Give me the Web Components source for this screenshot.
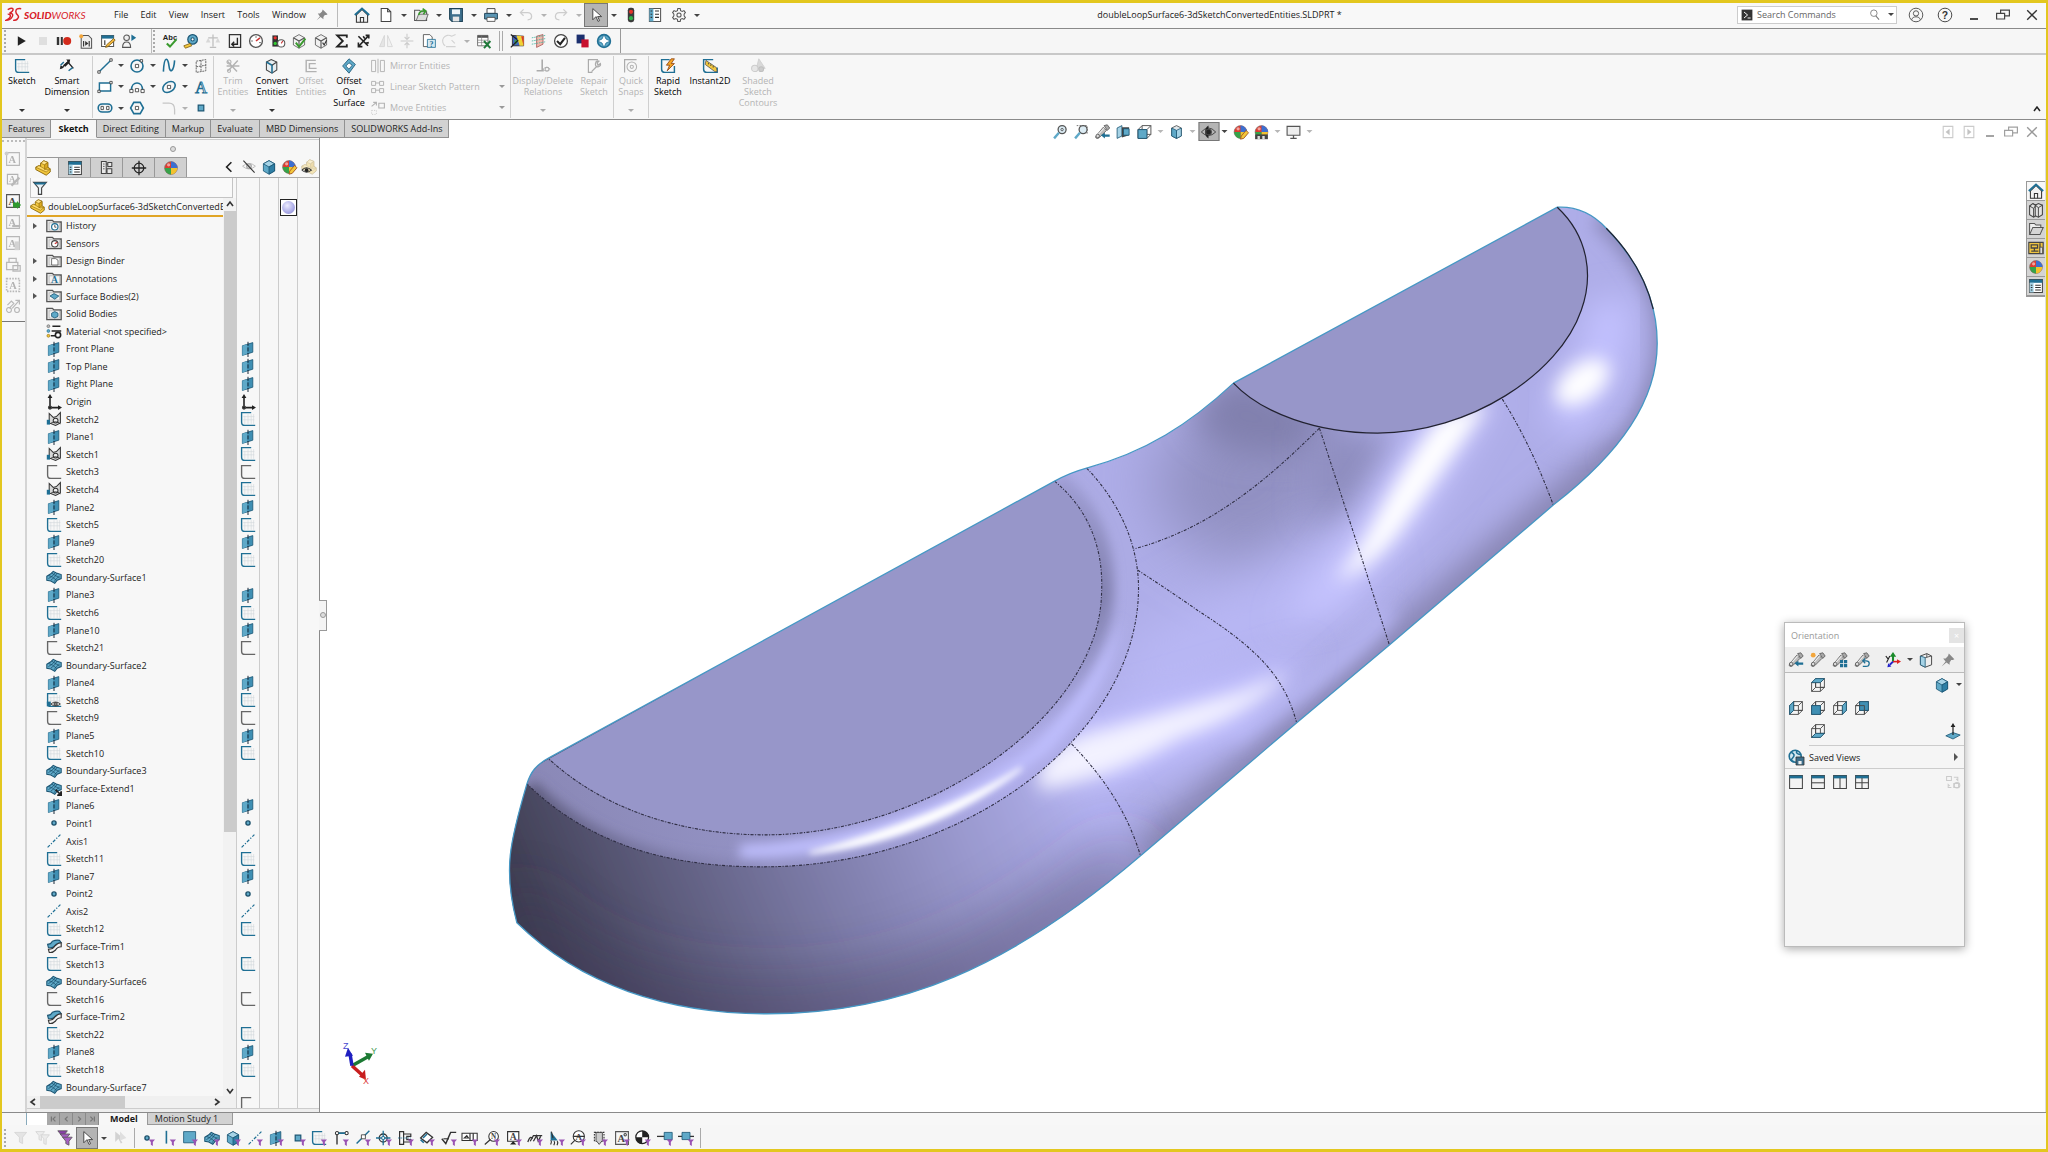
<!DOCTYPE html>
<html lang="en">
<head>
<meta charset="utf-8">
<title>doubleLoopSurface6-3dSketchConvertedEntities.SLDPRT *</title>
<style>
html,body{margin:0;height:100%;overflow:hidden}
body{font-family:"Open Sans","Noto Sans",sans-serif;font-size:9px;color:#1a1a1a;background:#f7f7f7}
</style>
</head>
<body>
<sw-app></sw-app>
<script>
/* ---------- icon drawing helpers (20 x 20 box) ---------- */
const S=(d,c='#444',w=1.4,x='')=>`<path d="${d}" fill="none" stroke="${c}" stroke-width="${w}" ${x}/>`;
const F=(d,c='#444',s='none',w=1)=>`<path d="${d}" fill="${c}" stroke="${s}" stroke-width="${w}"/>`;
const C=(x,y,r,f='none',s='#444',w=1.3)=>`<circle cx="${x}" cy="${y}" r="${r}" fill="${f}" stroke="${s}" stroke-width="${w}"/>`;
const T=(t,x,y,z=11,c='#444',f='Liberation Serif')=>`<text x="${x}" y="${y}" font-size="${z}" font-weight="bold" fill="${c}" text-anchor="middle" font-family="${f}">${t}</text>`;
const B='#1f6f94',L='#5fa9c8',P='#a6d3e6';
const folder=F('M1 17V3h7l2 2h9v12z','#e4e4e4','#555',1.6)+F('M4 6h13v9H4z','#f4f4f4','#999',.6);
const sheetA=S('M2 2h16v16H2z','#555',1.4)+T('A',9,15,13);
const cube=F('M3 6l7-4 7 4v9l-7 4-7-4z',L,'#1b5573')+F('M3 6l7 4 7-4-7-4z',P,'#1b5573')+F('M10 10l7-4v9l-7 4z','#2f7fa5','#1b5573');
const wire='M2 7h11v11H2zM7 2h11v11h-5M7 2v5M2 7l5-5M13 7l5-5M13 18l5-5M7 13v-6';
const wireHid='M7 2v11h11M2 18l5-5';
const tele=F('M2 15l9-11 4 4-9 9c-2 2-6 1-4-2z','#bdbdbd','#555')+F('M12 2l4-1 3 4-3 3z','#a8a8a8','#555')+S('M4 14l8-9','#eee',1.4)+C(4,15,2.2,'#ddd','#555',1);
const ball=C(10,10,8,'#e03b2f','#777',.8)+F('M10 2a8 8 0 0 1 8 8h-8z','#3c6fd0')+F('M10 10h8a8 8 0 0 1-8 8z','#f2c22e')+F('M10 10v8a8 8 0 0 1-8-8z','#37a24a')+C(7,6,2,'#ffffff88','none',0);
const part=F('M1 9l4-2 2 1V4l4-3 5 2v6l3 2v4l-5 4-13-7z','#f3c73c','#8f6b0c',1.2)+F('M7 4l4-3 5 2-4 3z','#ffe38a','#8f6b0c',.8)+F('M1 9l4-2 7 4 2 1 5-1-5 4z','#ffdb6a','#8f6b0c',.8)+F('M12 6l4-3v6l-4 3z','#dca91f','#8f6b0c',.8);
const sk=c=>S('M14 2H2v12q0 4 4 4h13',c,1.7);
const grid=S('M6 6v10M10 4v12M14 4v12M4 7h14M4 11h14M17 4v12','#cfd6da',.7);
const surf=F('M1 9l5-3 3-3 4 2 6 2v5l-5 2-3 4-5-3-5-1z',L,'#1b5573',1.3)+S('M3 12q5-2 9-8M6 14q5-3 8-9M10 16q3-5 7-7M3 8q5 1 10 6M7 5q4 3 10 6','#174d69',.9);
const skA=F('M4 15V3l5 5 4-1 5-5v13l-6 3z','#d8d8d8','#333',1.3)+C(12,12,3,'#eee','#333')+F('M1 11h4v6H1z',B)+S('M5 16q7-5 13 0','#333',1.2);
const cursor=F('M6 2v14l4-4 2.500 6 2-1-2.500-5h5z','#fff','#444',1.2);
const mag=C(12,7,5,'#dcecf4','#555',1.6)+S('M8 11l-6 7',L,3);
const funnel=F('M2 3h15l-5 6v8l-4-2V9z','#c8c8c8','#999');
const mini=F('M12 12h8l-2.700 3v5l-2.500-1.500V15z','#9a54b4');
const I={
play:F('M6 4v12l10-6z','#222'),stop:F('M5 5h10v10H5z','#bbb'),
rec:F('M1 5h3v10H1zM6 5h2.500v10H6z','#333')+C(14,10,5,'#d22a1b','none',0),
script:F('M4 3h9l4 4v12H4z','#eee','#555',1.3)+S('M7 10v7M14 10v7','#333')+F('M9 10l4 3-4 3z','#333')+C(4,4,2.5,'#f2a63c','none',0),
scriptedit:F('M2 3h15v14H2z','#fff','#555',1.3)+F('M2 3h15v4H2z',B)+S('M6 9v6','#333')+F('M8 15l9-8 2 2-9 8-3 1z','#f3b63c','#7a5a10'),
person:C(7,6,3.5,'#eee','#555')+S('M2 18c0-9 10-9 10 0z','#555')+F('M13 2l6 4-6 4z',B),
abc:T('Abc',10,9,9.5,'#222','Liberation Sans')+S('M6 13l4 4 8-9','#3a9a2e',2.6),
measure:C(12,8,6,L,'#1b5573',1.5)+C(12,8,2,'#fff','#1b5573')+F('M1 16l8-3 2 3-8 3z','#f3c73c','#7a5a10'),
scale:S('M10 2v15M4 6h12M6 18h8','#666',1.6)+F('M1 12l3-6 3 6zM13 12l3-6 3 6z','#aaa'),
section:F('M3 2h14v16H3z','#f3f3f3','#333',1.6)+S('M13 6v8H6M9 11l-3 3 3 3','#222',1.7),
gauge:C(10,10,8,'#fff','#555',1.7)+S('M10 10l5-4','#c33',2)+S('M4 10h2M10 4v2M14 12h2','#333',1),
perf:F('M3 3h7v14H3z','#333')+C(6.500,6,2,'#e33','none',0)+C(6.500,13,2,'#3c3','none',0)+C(14,13,4.5,'#fff','#555')+S('M14 13l2-3','#c33'),
boxcheck:F('M3 6l7-4 7 4v9l-7 4-7-4z','#f1f1f1','#555')+S('M3 6l7 4 7-4M10 10v9','#555')+S('M6 12l4 5 8-10','#3a9a2e',2.4),
boxv:F('M3 6l7-4 7 4v9l-7 4-7-4z','#f1f1f1','#555')+S('M3 6l7 4 7-4M10 10v9','#555')+S('M12 12l2 3 3-6','#333'),
sigma:S('M16 6V3H4l7 7-7 7h12v-3','#222',2.3),
fx:S('M3 4l12 12M16 3L4 16M12 3h4v4M3 12v5h5','#222',2)+S('M9 4l2 3M12 13l4-1','#222',2),
mirror:F('M8 3v14H2z','#ccc','#999')+F('M12 3v14h6z','#eee','#999'),
symm:S('M2 10h16M10 1v6M10 13v6M7 5l3 3 3-3M7 15l3-3 3 3','#888'),
docq:F('M3 2h8l3 3v12H3z','#fff','#444')+F('M8 8h10v10H8z','#d6e8f0',B)+T('?',13,17,10,B),
curve:S('M4 16a7 7 0 0 1 8-12M12 4l5-2M5 17h12M12 9l4 4','#999'),
excel:F('M2 3h13v13H2z','#fff','#555')+F('M2 3h13v3H2z','#555')+S('M2 9h13M2 12h13M7 3v13','#777',.8)+S('M10 10l8 9M18 10l-8 9','#1f7a3a',2.4),
sim:F('M3 3l14 1v12H3z','#3f62c4','#222')+F('M8 3l9 1v12H12z','#f0d336')+F('M14 4h3v12z','#d8392b')+F('M5 9l6 0-4 6z','#37a24a')+S('M1 18L10 9M1 2l8 6','#222',1.6),
flow:F('M7 4l8-2v12l-8 4z','#f0b8ac','#a55')+S('M1 6l17-3M1 10l17-3M1 14l17-3','#43b2a0',1,'stroke-dasharray="2 1"'),
okcirc:C(10,10,8,'#fff','#444',1.6)+S('M5 10l4 4 6-8','#222',2.6),
rects:F('M2 2h10v11H2z','#1b2f6e')+F('M8 8h9v10H8z','#c8102e'),
star:C(10,10,8,L,B,2)+F('M10 2l2.500 5.500L18 10l-5.500 2.500L10 18l-2.500-5.500L2 10l5.500-2.500z','#fff',B),
home:F('M3 10v9h14v-9l-7-7z','#f2f2f2','#333',1.3)+S('M1 10l9-8 9 8',B,2.4)+S('M8 19v-6h4v6','#333',1.3),
doc:F('M4 2h8l4 4v12H4z','#fff','#444',1.3)+S('M12 2v4h4','#444',1.3),
open:F('M2 17V4h6l2 2h7v11z','#f3f3f3','#555',1.3)+F('M4 17l3-8h12l-3 8z','#ddd','#555')+S('M7 10c1-5 5-6 8-5M12 2l4 3-3 4','#3a9a2e',2),
save:F('M2 2h16v16H5l-3-3z','#3d6f8c','#1f4358',1.3)+F('M5 3h10v6H5z','#eef5f8')+F('M6 12h8v6H6z','#e6e6e6'),
print:F('M5 2h10v6H5z','#fff','#444',1.2)+F('M2 8h16v7H2z','#5a95b3','#1f4358',1.2)+F('M5 13h10v5H5z','#fff','#444'),
undo:S('M3 7h9q5 0 5 5 0 4-5 4M7 3L3 7l4 4','#888',1.6),
redo:S('M17 7H8q-5 0-5 5 0 4 5 4M13 3l4 4-4 4','#888',1.6),
cursor,
light:`<rect x="6" y="1" width="8" height="18" rx="3" fill="#3a3a3a"/>`+C(10,6,2.6,'#e5332a','none',0)+C(10,14,2.6,'#2fb34a','none',0),
options:F('M3 2h14v16H3z','#fff','#555',1.3)+F('M3 2h5v16H3z',L)+S('M10 5h5M10 9h5M10 13h5M4.500 5h2M4.500 9h2M4.500 13h2','#333',1.4),
gear:S('M8.500 2h3l.5 2.500 2 1 2.200-1 1.800 2.500-1.600 2v2l1.600 2-1.800 2.500-2.200-1-2 1-.5 2.500h-3L8 15.500l-2-1-2.200 1L2 13l1.600-2V9L2 7l1.800-2.500 2.200 1 2-1z','#555',1.3)+C(10,10,2.6,'none','#555'),
pin:F('M11 2l7 7-2 1-2 0-2 3 0 3-4-3-6 5 5-6-3-4h3l3-3z','#888'),
search:C(9,8,5,'none','#777',1.3)+S('M12 12l5 6','#777',1.6),
term:F('M1 1h18v18H1z','#333')+S('M5 5l6 5-6 5M11 15h5','#fff',1.6),
user:C(10,10,8.5,'#f7f7f7','#555',1.2)+C(10,8,3.3,'none','#555',1.2)+S('M4.500 16c1-5 10-5 11 0','#555',1.2),
help:C(10,10,8.5,'#f7f7f7','#444',1.2)+T('?',10,14.500,13,'#333','Liberation Sans'),
min:S('M5 15h10','#333',2.2),rest:S('M2 8h10v7H2zM7 8V4h11v7h-6','#444',1.5),close:S('M4 4l12 12M16 4L4 16','#333',1.7),
sketch:sk(B)+grid,skgray:sk('#666'),
dim:S('M3 13l8-8 7 8','#222',1.6)+F('M9 2l5 0-1 5zM1 14l1-5 4 3z','#222')+S('M2 9l4-4M12 16l5-4',B,1.8)+F('M5 9l6-5 2 2-5 5z','#222'),
line:S('M3 17L17 3',B,1.8)+F('M1 16h3v3H1zM16 1h3v3h-3z','#fff','#333'),
circle:C(10,10,7.5,'none',B,2)+F('M8 8h4v4H8z','#fff','#333')+F('M14 2h3v3h-3z','#fff','#333'),
spline:S('M3 17C4 -5 9 0 10 10S16 17 17 3',B,2),
planegrid:S('M4 4l12-2v14L4 18zM10 3v14M4 11l12-2','#555',1.1,'stroke-dasharray="2.500 1"'),
rect:F('M3 5h14v10H3z','#fff',B,1.8)+F('M1 14h3v3H1zM16 3h3v3h-3z','#fff','#333'),
arc:S('M3 14C3 2 17 2 17 14',B,2)+F('M1 13h4v4H1zM15 13h4v4h-4zM8 12h4v4H8z','#fff','#333'),
ellipse:`<ellipse cx="10" cy="10" rx="8.500" ry="6" transform="rotate(-35 10 10)" fill="none" stroke="${B}" stroke-width="2"/>`+F('M8 8h4v4H8z','#fff','#333'),
text:`<text x="10" y="18" font-size="21" text-anchor="middle" font-family="Liberation Serif" fill="#fff" stroke="${B}" stroke-width="1.1">A</text>`,
slot:`<rect x="1.500" y="5" width="17" height="10" rx="5" fill="none" stroke="${B}" stroke-width="2"/>`+F('M5 8h3v4H5zM12 8h3v4h-3z','#fff','#333'),
poly:F('M6 3h8l4 7-4 7H6l-4-7z','none',B,2)+F('M8 8h4v4H8z','#fff','#333'),
fillet:S('M2 4h8q7 0 7 8v6','#777',1.6),
pt:F('M6.500 6.500h7v7h-7z',L,'#1b5573',1.5),
trim:S('M3 4l12 13M16 3L4 16M2 10h16','#444',1.8)+C(5,5,2.5)+C(5,16,2),
convert:F('M3 5l6-3 7 3v10l-6 4-7-4z','#e8eef1','#444',1.3)+S('M3 5l7 4v10',B,2)+S('M10 9l6-4','#444'),
offset:S('M16 3H4v14h13M16 7H8v6h9','#444',1.8),
offsurf:F('M10 1l8 7-8 11-8-9z',L,'#1b5573')+F('M10 6l4 3-4 5-4-4z','#fff','#1b5573'),
mirrorent:S('M2 3v14M2 3h5v14H2M18 3v14M18 3h-5v14h5M10 1v18','#444',1.2),
pattern:S('M2 3h5v5H2zM2 12h5v5H2zM12 3h5v5h-5zM12 12h5v5h-5zM7 5h5M7 14h5','#444',1.2),
move:S('M2 8l6-5M4 3h4v4M11 4h7v6h-7z','#444',1.4)+S('M2 13h6v5H2z','#777',1,'stroke-dasharray="1.500 1.500"'),
rel:S('M9 2v14M2 16h9','#333',2)+C(15,14,2.3)+S('M10 14q5-5 9 0-4 5-9 0','#333',1),
repair:S('M15 2H3v16h5','#333',1.5)+S('M7 17l6-6M12 6q-1 5 3 5 4-1 3-4l-3 2-1-3 2-2q-3-1-4 2','#333',1.6),
snap:S('M2 18V2h15','#333',1.5)+C(11,11,6)+C(11,11,2),
rapid:S('M12 2H2v12q0 4 4 4h12V10',B,1.8)+F('M18 1l-4 0-6 8h4l-3 7 9-9h-4z','#f5a623','#8a3b0c'),
inst:S('M14 2H2v12q0 4 4 4h13V12',B,1.8)+F('M5 3l13 9 1 5-3 0-12-9z','#f3c73c','#555')+S('M8 6v2M11 8v2M14 10v2','#333',1),
shaded:F('M11 1l8 12H8z','#aaa','#888')+C(6,13,4,'#ccc','#888')+C(14,14,3,'#888','#666'),
filt:F('M2 3h16l-6 7v8H8v-8z','#e9f1f5','#444',1.4)+F('M2 3h16l-2 2.500H4z',B),
part,
prop:F('M2 2h16v16H2z','#fff','#444',1.3)+F('M2 2h16v4H2z',B)+F('M2 6h5v12H2z',P)+S('M9 9h7M9 12h7M9 15h7M3.500 9h2M3.500 12h2M3.500 15h2','#333',1.3),
config:F('M3 2h6v15H3z','#e8e8e8','#444',1.3)+S('M5 5h2M5 8h2M5 11h2','#444',1)+F('M11 3h5v5h-5zM10 11h6v6h-6z','#e8e8e8','#444',1.3)+S('M9 5h2M9 14h1','#444'),
cross:C(10,10,6,'none','#222',1.5)+S('M10 1v18M1 10h18','#222',1.6),
ball,ballpen:ball+F('M11 15l6-7 3 3-6 7-4 1z','#f3c73c','#9a4a20'),
chev:S('M13 4l-6 6 6 6','#222',2),
eyeoff:S('M2 9q8-7 16 0-8 7-16 0','#bbb',1.2)+C(10,9,3,'#ccc','#aaa')+S('M3 2l14 15','#333',1.4),
cube,
parteye:`<g opacity=".35">${part}</g>`+S('M1 14q6-6 12 0-6 5-12 0','#333',1.3)+C(7,14,2.3,'#222','none',0),
hist:folder+C(11,11,4,'#fff',B,1.5)+S('M11 8.500v3h2','#333',1),
sens:folder+C(11,11,4,'#fff','#444',1.4)+S('M11 11l3-2','#c33',1.6),
binder:folder+F('M7 7h5l3 2v6H7z','#fff','#555'),
anno:folder+T('A',10.5,15,12,B),
sbody:folder+F('M5 10l5-3 6 3-5 4z',L,'#1b5573'),
solid:folder+F('M7 9l4-2 4 2v4l-4 2-4-2z',L,'#1b5573'),
mat:C(3,4,1.8,'#bbb','#666',.8)+C(3,10,1.8,L,B,.8)+C(3,16,1.8,'#f3c73c','#8f6b0c',.8)+S('M8 4h10M7 10h12M6 16h6','#222',1.8)+C(15,15,3.3,'#fff','#222',2),
plane:F('M3 6l13-4v12L3 18z','#3f8fb3','#1b5573')+F('M3 6l6-2v12l-6 2z',L)+S('M10 1v19','#123',1.2,'stroke-dasharray="5 2"'),
origin:S('M5 4v13h12','#222',2)+F('M5 0l3 5H2zM20 17l-5-3v6z','#222')+C(5,17,2,'#222'),
skA,skB:sk(B)+grid+F('M1 12h5v6H1z',B)+S('M6 15q6-5 12 0-6 5-12 0','#444',1.2)+C(12,15,2,'#888'),
surf,surfx:surf+F('M12 12l7 7M14 19h5v-5','#222','#222',2),
surft:F('M2 8q4 0 6-4 5-2 9-1l2 3q-6 0-8 4-3 3-8 2z',L,'#1b5573',1.4)+F('M3 14q6 0 8-4 4-4 8-4v5q-5 0-7 4-4 4-8 3z','#f2f2f2','#333',1.4),
dot:C(10,10,2.6,L,'#1b4f6a',1.7),
axis:S('M2 18L18 2',B,1.5,'stroke-dasharray="4 2 1.500 2"'),
blank:'',
zoomfit:mag+C(12,7,1.5,'none','#444',1),zoomarea:S('M4 2h13v10','#555',1,'stroke-dasharray="2 1.500"')+mag,prev:tele+F('M8 14l5-3v2h6v3h-6v2z',B),
sect:F('M2 5l6-3v13l-6 3z',P,'#1b5573')+F('M8 4h9v10l-9 3z','#444')+F('M10 6h7v8h-7z',L,'#1b5573'),
views:F('M2 7h10v11H2z',L,'#1b5573')+S(wire,'#555',1.2)+F('M2 7h11v11H2z',L,'#1b5573'),
dispst:F('M4 5l6-3 6 3v10l-6 3-6-3z','#dfe7eb','#444')+F('M4 5l6 3v10l-6-3z',L,'#1b5573')+F('M10 8l6-3v10l-6 3z',P,'#1b5573'),
eye:S('M1 10q9-10 18 0-9 9-18 0','#444',1.2)+F('M10 2v16a8 8 0 0 1-4-8 8 8 0 0 1 4-8','#222')+C(10,10,3.5,'#222'),
scene:ball+F('M2 13h16v6H2z','#444')+F('M5 15h3v4H5zM11 15h3v4h-3z','#ddd'),
monitor:F('M2 3h16v11H2z','#eee','#555',1.4)+S('M10 14v4M6 18h8','#555',1.6),
docl:S('M4 3h12v14H4z','#999',1.4)+F('M12 6v8l-5-4z','#888'),docr:S('M4 3h12v14H4z','#999',1.4)+F('M8 6v8l5-4z','#888'),
lib:F('M2 5l4-3 4 2v13l-3 2-5-3z','#e2e2e2','#444',1.3)+F('M9 4l4-2 5 2v12l-5 3-4-2z','#e2e2e2','#444',1.3)+S('M2 5l5 3v11M6 2l4 2-3 4M9 4l4 3v12M13 7l5-3','#444',1.2),
fold2:F('M2 17V3h6l2 2h6v3','#eee','#555',1.3)+F('M2 17l4-9h13l-4 9z','#d5d5d5','#555',1.3),
palette:F('M1 3h18v14H1z','#f0c541','#444',1.4)+S('M4 6h8v4H4zM4 14h9M8 10v4M15 4v12','#444',1.6)+F('M15 9h3v8h-3z','#eee','#444'),
v_l:tele+F('M8 14l5-3v2h6v3h-6v2z',B),v_new:tele+C(4,4,3,'#f2a63c','none',0),v_grid:tele+F('M10 10h4v4h-4zM15 10h4v4h-4zM10 15h4v4h-4zM15 15h4v4h-4z',B),v_undo:tele+S('M11 18h4q4 0 4-4 0-3-4-3h-3M14 8l-3 3 3 3',B,1.6),
triad:S('M10 12V4','#1a8a2a',2.6)+F('M10 0l4 6H6z','#1a8a2a')+S('M10 12h6','#d22',2)+F('M20 12l-5-3v6z','#d22')+S('M10 12l-4 4','#22c',2.4)+F('M3 19l1-5 4 4z','#22c')+S('M1 5l3 4 2-4M4 9l-2 4','#222',1.4),
persp:F('M3 5l8-3 6 3v11l-8 3-6-3z','#eee','#444',1.2)+F('M3 5l6 2v12l-6-3z',P,'#1b5573')+S('M9 7l8-2M11 2v5','#444',1),
o_top:S(wire+wireHid,'#444',1.1)+F('M2 7l5-5h11l-5 5z',L,'#1b5573'),o_bot:S(wire+wireHid,'#444',1.1)+F('M2 18l5-5h11l-5 5z',L,'#1b5573'),
o_left:S(wire+wireHid,'#444',1.1)+F('M2 7l5-5v11l-5 5z',L,'#1b5573'),o_right:S(wire+wireHid,'#444',1.1)+F('M13 7l5-5v11l-5 5z',L,'#1b5573'),
o_front:S(wire+wireHid,'#444',1.1)+F('M2 7h11v11H2z','#3f8fb3','#1b5573'),o_back:S(wire+wireHid,'#444',1.1)+F('M7 2h11v11H7z','#3f8fb3','#1b5573')+S('M2 7h11v11','#444',1.1),
normal:F('M1 16l9-4 9 3-9 5z',L,'#1b5573')+S('M10 15V4','#222',1.5)+F('M10 0l3 5H7z','#222'),
globe:C(9,9,7.5,'#d5e8f0',B,2)+S('M4 4q6 3 2 7t2 5M11 2q-2 4 5 5',B,2)+F('M10 10h10v10H10z','#3d6f8c','#333')+F('M13 15h4v4h-4z','#eee'),
w1:F('M2 2h16v16H2z','#f3f3f3','#444',1.3)+F('M2 2h16v3.500H2z',B),
link:S('M2 3h6v5H2zM11 12h6v5h-6zM11 4h5v4l-2-2M8 17H4v-4l2 2','#888',1.3)+C(15,14,3.5,'none','#888'),
f1:funnel,f2:F('M1 2h11l-4 5v6l-3-1V7z','#ddd','#999')+F('M7 6h11l-4 5v7l-3-1v-6z','#ddd','#999'),
f3:F('M1 1h12l-4 5H5z','#8a3fa8','#555')+F('M4 5h12l-4 5H8z','#a65fc2','#555')+F('M7 9h12l-4 5v5l-4-2v-3z','#a65fc2','#555'),
curs2:F('M4 2v13l4-4 3 6 2-1-3-5h5z','#999')+F('M10 2v11l8-3z','#bbb'),
edge:S('M8 1v16',B,2),face:F('M2 2h15v14H2z',L,'#1b5573'),
cl:S('M5 18V4h12M3 4h4M17 2v4','#333',1.7)+C(5,4,2,'#fff','#333')+C(17,4,2,'#fff','#333')+S('M7 4h8',B,2),
seg:S('M2 17L18 1',B,1.8)+F('M8 6h5v5H8z','#fff','#333'),tgt:C(9,10,5,'none','#333',1.6)+S('M9 1v18M0 10h18',B,1.6)+C(9,10,2,'#fff',B),
datum:S('M2 2h5v16H2zM7 5h9v3h-5v4h5v3H7','#333',1.5)+S('M0 10h16',B,1,'stroke-dasharray="2 1"'),lens:F('M2 10l7-7 8 6-7 7z','#fff','#333',1.6)+S('M5 10l5-5M2 12l4 4',B,2),
surfin:S('M1 11l5 6 6-14h7','#333',1.8)+S('M3 11h7','#333'),gtol:F('M0 4h19v9H0z','#fff','#333',1.3)+S('M10 4v9M14 4v9M3 10l3-3 2 3z','#333',1.5),
noten:C(12,8,6,'#fff','#333')+T('N',12,11.5,9)+S('M8 12l-7 6','#333',1.6),
anote:F('M2 2h14v12H2z','#fff','#333',1.4)+T('A',9,12.5,12)+F('M5 18l4-4 4 4z','#222'),
weld:S('M1 15q3-9 6-4M4 14l4-7h11M8 14l4-7 2 7 3-6','#333',1.6),
cater:F('M2 2v11h9z',B)+S('M2 18q2-4 0-5M6 19q2-4 0-5M10 19q2-4 0-5','#333',1.4)+S('M3 2l2 8','#333'),
balloon:C(11,8,7,'#fff','#333')+T('A',11,13,11)+S('M6 13l-5 5M4 8h14','#333',1.4),
cosm:S('M3 3h12v11H3z','#333',1.4,'stroke-dasharray="2 1.500"')+F('M5 3h8v10l-4 5-4-5z','#ccc','#333'),
sheet:sheetA+C(14,6,1.5),com:C(9,9,8,'#fff','#222',1.5)+F('M9 1a8 8 0 0 1 8 8H9zM9 9v8a8 8 0 0 1-8-8z','#222'),
conn:S('M0 8h12','#333',1.6)+F('M9 3h10v9H9z',L,'#1b5573'),conn2:S('M0 8h20','#333',1.6)+F('M5 3h10v9H5z',L,'#1b5573'),
an1:sheetA+C(2,3,2.5,'#888','none',0),an2:S('M3 3h13v12H3z')+T('A',9,13,11)+S('M8 17L18 7','#555',3),an3:sheetA+F('M10 12l5 0v-2l5 5-5 5v-2h-5z','#2f9a2f'),an4:sheetA+S('M9 15h10','#555',2.6),an5:sheetA+F('M12 8h6v11h-6z','#999'),
an6:S('M2 8h14v9H2zM5 8V3h9v5M10 12h9v7h-9z','#555',1.6),an7:S('M2 2h16v16H2z','#555',2,'stroke-dasharray="2 1.500"')+T('A',10,15,13),an8:C(5,15,3)+C(15,15,3)+S('M3 9l5-5 3 3-6 6M9 13l8-9M13 3h5v5','#555',1.5)
};
I.w2=I.w1+S('M2 11h16','#444',1.3);I.w3=I.w1+S('M10 5v13','#444',1.3);I.w4=I.w1+S('M2 11h16M10 5v13','#444',1.3);

class Base extends HTMLElement{
  css(){return ''} html(){return ''}
  connectedCallback(){
    if(this.shadowRoot)return;
    this.attachShadow({mode:'open'}).innerHTML=`<style>*{box-sizing:border-box}button,input{font:inherit;color:inherit;background:none;border:0;padding:0;margin:0;white-space:nowrap}${this.css()}</style>${this.html()}`;
  }
}
const def=(n,c)=>customElements.define(n,c);
const ic=(n,z)=>`<sw-icon name="${n}"${z?` style="--size:${z}px"`:''}></sw-icon>`;
const tb=(n,a='')=>`<sw-tool icon="${n}" ${a}></sw-tool>`;
const ar='<sw-tool arrow></sw-tool>', arx='<sw-tool arrow off></sw-tool>';

/* a single picture taken from the icon table */
def('sw-icon',class extends Base{
  css(){return ':host{display:block;width:var(--size,16px);height:var(--size,16px);flex:none}svg{display:block;width:100%;height:100%;overflow:visible}'}
  html(){return `<svg viewBox="0 0 20 20" aria-hidden="true">${I[this.getAttribute('name')]||''}${this.hasAttribute('filter')?mini:''}</svg>`}
});
/* a toolbar button: an icon or a small drop-down arrow */
def('sw-tool',class extends Base{
  css(){return `:host{display:flex;flex:0 0 var(--cell,24px);align-self:stretch;min-width:0}:host([arrow]){flex-basis:var(--arrow,11px)}:host([fill]){flex:1 1 0}
  :host([off]) button{filter:grayscale(1);opacity:.38}:host([on]){background:#b4b4b4;outline:1px solid #777;outline-offset:-1px}
  button{flex:1;display:flex;align-items:center;justify-content:center}i{border:3px solid transparent;border-top-color:#444;border-bottom:0}`}
  html(){const n=this.getAttribute('icon');return `<button aria-label="${n||'more'}">${n?`<sw-icon name="${n}"${this.hasAttribute('filter')?' filter':''}></sw-icon>`:'<i></i>'}</button>`}
});

def('sw-titlebar',class extends Base{
  css(){return `:host{display:flex;height:26px;border-bottom:1px solid #8a8a8a;align-items:center;background:#f8f8f8;padding-bottom:2px}
  .logo{display:flex;align-items:center;width:103px;padding-left:3px;color:#d8232a;font:italic 10px Lato,sans-serif;flex:none}.logo svg{width:18px;height:18px;margin-right:1px}.logo b{font-weight:900}
  nav{display:flex;width:202px;justify-content:space-between;padding:0 1px 0 9px;flex:none}
  .pin{width:30px;display:flex;justify-content:center}.tools{display:flex;height:24px;border-left:1px solid #bbb;padding-left:12px;align-self:flex-start;align-items:center}
  .name{flex:1;text-align:center}
  .search{display:flex;align-items:center;width:160px;height:18px;border:1px solid #ccc;background:#fff;padding-left:3px;gap:4px;color:#777}
  .search label{display:flex}input{flex:1;min-width:0;outline:0}input::placeholder{color:#666;opacity:1}
  .win{display:flex;height:24px;padding-left:4px;--cell:29px}`}
  html(){return `<div class="logo"><svg viewBox="0 0 20 20"><path d="M3 4q6-3 6 0 0 2-4 4 5 0 3 4-2 4-7 4 5-3 5-5 0-2-3-2M18 3q-6-1-6 3 0 2 2 4t0 4q-1 2-5 2" fill="none" stroke="#d8232a" stroke-width="1.600"/></svg><b>SOLID</b>WORKS</div>
  <nav>${['File','Edit','View','Insert','Tools','Window'].map(t=>`<button>${t}</button>`).join('')}</nav><div class="pin">${ic('pin',14)}</div>
  <div class="tools">${tb('home')}${tb('doc')}${ar}${tb('open')}${ar}${tb('save')}${ar}${tb('print')}${ar}${tb('undo','off')}${arx}${tb('redo','off')}${arx}${tb('cursor','on')}${ar}${tb('light')}${tb('options')}${tb('gear')}${ar}</div>
  <div class="name">doubleLoopSurface6-3dSketchConvertedEntities.SLDPRT *</div>
  <div class="search"><label for="q">${ic('term',12)}</label><input id="q" placeholder="Search Commands" aria-label="Search Commands">${ic('search',13)}<sw-tool arrow></sw-tool></div>
  <div class="win">${['user','help','min','rest','close'].map(n=>tb(n)).join('')}</div>`}
});

def('sw-macrobar',class extends Base{
  css(){return `:host{display:flex;height:26px;border-bottom:2px solid #c8c8c8;background:#f6f6f6;padding-left:2px}
  .grip{width:3px;margin:1px 3px 1px 0;border-left:2px dotted #aaa}div{display:flex}.a{width:130px;margin-right:11px}.b{width:302px}.c{width:108px;margin-left:4px}
  .s{width:4px;border:solid #aaa;border-width:0 1px;margin:2px 0 2px 3px}.e{border-right:1px solid #999;width:6px}.sep{border-left:1px solid #bbb;width:2px}`}
  html(){const m=a=>a.map(n=>n[0]=='-'?tb(n.slice(1),'fill off'):tb(n,'fill')).join('');
  return `<div class="grip"></div><div class="a">${m(['play','-stop','rec','script','scriptedit','person'])}</div><div class="sep"></div><div class="grip"></div>
  <div class="b">${m(['abc','measure','-scale','section','gauge','perf','boxcheck','boxv','sigma','fx','-mirror','-symm','docq','-curve'])}</div>${arx}<sw-tool icon="excel"></sw-tool><div class="s"></div>
  <div class="c">${m(['sim','flow','okcirc','rects','star'])}</div><div class="e"></div>`}
});

/* large ribbon command: icon over a slotted caption */
def('sw-command',class extends Base{
  css(){return `:host{display:flex;flex:none}button{flex:1;display:flex;flex-direction:column;align-items:center;padding:3px 0 7px;line-height:11px;color:#000}
  :host([off]) button{color:#b4b4b4}:host([off]) sw-icon,:host([off]) i{filter:grayscale(1);opacity:.38}
  i{margin-top:auto;border:3px solid transparent;border-top-color:#333;border-bottom:0}span{margin-top:1px}`}
  html(){return `<button><sw-icon name="${this.getAttribute('icon')}"></sw-icon><span><slot></slot></span>${this.hasAttribute('menu')?'<i></i>':''}</button>`}
});
def('sw-ribbon',class extends Base{
  css(){return `:host{display:flex;height:65px;border-bottom:1px solid #8a8a8a;background:#f7f7f7}
  hr{width:1px;margin:1px 0;border:0;background:#cfcfcf;flex:none}.grid{display:grid;grid-template-columns:repeat(4,32px);width:120px;padding-left:1px;--cell:22px;--arrow:10px}.grid div{display:flex}
  .list{width:142px;display:grid;grid-template-rows:repeat(3,21px);color:#b4b4b4}.list button{display:flex;align-items:center;gap:4px;padding-left:2px}.list sw-icon{filter:grayscale(1);opacity:.38}.list i{margin-left:auto;margin-right:5px;border:3px solid transparent;border-top-color:#999;border-bottom:0}
  .fold{margin-left:auto;align-self:flex-end;padding:0 5px 4px}.w34{width:34px}.w38{width:38px}.w40{width:40px}.w46{width:46px}.w50{width:50px}.w64{width:64px}`}
  html(){const c=(i,w,t,a='')=>`<sw-command icon="${i}" class="w${w}" ${a}>${t}</sw-command>`;
  const g=(n,a=1,o='')=>`<div>${tb(n,o)}${a?(o?arx:ar):''}</div>`;
  return c('sketch',40,'Sketch','menu')+c('dim',50,'Smart<br>Dimension','menu')+'<hr>'+
  `<div class="grid">${g('line')}${g('circle')}${g('spline')}${g('planegrid',0)}${g('rect')}${g('arc')}${g('ellipse')}${g('text',0)}${g('slot')}${g('poly',0)}${g('fillet',1,'off')}${g('pt',0)}</div><hr>`+
  c('trim',38,'Trim<br>Entities','off menu')+c('convert',40,'Convert<br>Entities','menu')+c('offset',38,'Offset<br>Entities','off')+c('offsurf',38,'Offset<br>On<br>Surface')+
  `<div class="list"><button>${ic('mirrorent')}Mirror Entities</button><button>${ic('pattern')}Linear Sketch Pattern<i></i></button><button>${ic('move')}Move Entities<i></i></button></div><hr>`+
  c('rel',64,'Display/Delete<br>Relations','off menu')+c('repair',38,'Repair<br>Sketch','off')+'<hr>'+c('snap',34,'Quick<br>Snaps','off menu')+'<hr>'+c('rapid',38,'Rapid<br>Sketch')+c('inst',46,'Instant2D')+c('shaded',50,'Shaded<br>Sketch<br>Contours','off')+
  `<button class="fold" aria-label="Collapse"><svg width="8" height="6" viewBox="0 0 8 6"><path d="M1 5l3-4 3 4" fill="none" stroke="#222" stroke-width="1.500"/></svg></button>`}
});
def('sw-tabs',class extends Base{
  css(){return `:host{display:flex;height:18px}button{background:#d2d2d2;border:1px solid #919191;border-left:0;border-top:0;padding:0 6px 1px;color:#222}button.on{background:#f7f7f7;font-weight:bold;border-bottom-color:#f7f7f7;padding:0 7px;color:#111}`}
  html(){return ['Features','Sketch','Direct Editing','Markup','Evaluate','MBD Dimensions','SOLIDWORKS Add-Ins'].map(t=>`<button${t=='Sketch'?' class="on"':''}>${t}</button>`).join('')}
});
def('sw-annostrip',class extends Base{
  css(){return `:host{display:block;width:23px;flex:none}div{display:flex;flex-direction:column;height:182px;margin-top:3px;border-top:2px dotted #bbb;border-bottom:1px solid #777;padding:7px 1px 5px 0}`}
  html(){return `<div>${[1,2,3,4,5,6,7,8].map(n=>tb('an'+n,'fill'+(n==3?'':' off'))).join('')}</div>`}
});

/* feature list: caption, icon, display-pane icon, expandable */
const TREE=[['History','hist','',1],['Sensors','sens'],['Design Binder','binder','',1],['Annotations','anno','',1],['Surface Bodies(2)','sbody','',1],['Solid Bodies','solid'],['Material <not specified>','mat'],
['Front Plane','plane','plane'],['Top Plane','plane','plane'],['Right Plane','plane','plane'],['Origin','origin','origin'],['Sketch2','skA','sketch'],['Plane1','plane','plane'],['Sketch1','skA','sketch'],['Sketch3','skgray','skgray'],['Sketch4','skA','sketch'],
['Plane2','plane','plane'],['Sketch5','sketch','sketch'],['Plane9','plane','plane'],['Sketch20','sketch','sketch'],['Boundary-Surface1','surf'],['Plane3','plane','plane'],['Sketch6','sketch','sketch'],['Plane10','plane','plane'],['Sketch21','skgray','skgray'],['Boundary-Surface2','surf'],
['Plane4','plane','plane'],['Sketch8','skB','sketch'],['Sketch9','skgray','skgray'],['Plane5','plane','plane'],['Sketch10','sketch','sketch'],['Boundary-Surface3','surf'],['Surface-Extend1','surfx'],['Plane6','plane','plane'],['Point1','dot','dot'],['Axis1','axis','axis'],['Sketch11','sketch','sketch'],
['Plane7','plane','plane'],['Point2','dot','dot'],['Axis2','axis','axis'],['Sketch12','sketch','sketch'],['Surface-Trim1','surft'],['Sketch13','sketch','sketch'],['Boundary-Surface6','surf'],['Sketch16','skgray','skgray'],['Surface-Trim2','surft'],['Sketch22','sketch','sketch'],['Plane8','plane','plane'],['Sketch18','sketch','sketch'],['Boundary-Surface7','surf']];
const esc=t=>t.replace('<','&lt;').replace('>','&gt;');
const chev=(d)=>`<svg width="10" height="10" viewBox="0 0 10 10"><path d="${d}" fill="none" stroke="#333" stroke-width="1.600"/></svg>`;
def('sw-feature-row',class extends Base{
  css(){return `:host{display:flex;flex:1 1 0;min-height:0;align-items:center;padding-left:6px;white-space:nowrap}i{width:13px;flex:none}i::before{content:"";display:block;width:0;border:3px solid transparent;border-right:0;border-left:4px solid transparent}:host([open]) i::before{border-left-color:#555}span{margin-left:4px}`}
  html(){return `<i></i>${ic(this.getAttribute('icon'))}<span><slot></slot></span>`}
});
def('sw-feature-tree',class extends Base{
  css(){return `:host{display:flex;flex-direction:column;flex:none;width:295px;border-left:2px solid #d4d4d4;border-right:1px solid #8a8a8a;background:#f7f7f7;position:relative}
  .grip{border-top:1px solid #ccc;margin-top:2px;display:flex;justify-content:center;align-items:center;height:18px}.grip::before,.handle::before{content:"";width:4px;height:4px;border:1px solid #999;border-radius:50%;background:#ddd}
  .tabs{display:flex;height:21px;border-bottom:1px solid #aaa}.tabs>div{display:flex;width:160px;border-top:1px solid #999}.tabs .t{background:#d0d0d0;border-right:1px solid #999;border-bottom:0}.tabs .t.on{background:#f7f7f7;margin-bottom:-1px}
  .more{display:flex;margin-left:auto;--cell:20px}
  .body{display:flex;flex:1;min-height:0}.tree{width:209px;display:flex;flex-direction:column}
  .filter{height:20px;border:1px solid #c4c4c4;border-top:0;margin:0 3px;background:#f9f9f9;display:flex;align-items:center;padding-left:1px}.filter input{flex:1;min-width:0}
  .mid{display:flex;flex:1;min-height:0}.list{width:196px;display:flex;flex-direction:column;overflow:hidden}.root{height:19px;flex:none;display:flex;align-items:center;gap:3px;border-bottom:2px solid #e0a526;padding-left:3px;white-space:nowrap;overflow:hidden}
  .vs{width:13px;display:flex;flex-direction:column;align-items:center;background:#f2f2f2}.vs b{flex:1;width:12px;display:block;background:#f2f2f2;margin-top:3px}.vs b::before{content:"";display:block;height:71%;background:#cbcbcb}
  .hs{height:12px;background:#f0f0f0;display:flex;align-items:center;padding:0 14px 0 1px}.hs b{height:12px;width:85px;background:#cbcbcb;margin:0 auto 0 2px}
  .pane{flex:1;display:flex}.col{border-left:1px solid #ccc;display:flex;flex-direction:column;align-items:center}.c1{width:23px}.c2{width:19px}.c3{width:19px}.c4{flex:1}.c1 div{flex:1 1 0;min-height:0;display:flex;align-items:center}.c1 .top{flex:0 0 39px}.c1 .last{flex:0 0 12px;overflow:hidden;align-items:flex-start}
  .sw{width:17px;height:17px;border:1px solid #222;margin-top:21px;background:#fff;display:grid;place-items:center}.sw::before{content:"";width:13px;height:13px;border-radius:50%;background:radial-gradient(circle at 40% 35%,#eef,#a9a9e6 60%,#8c8cc8)}
  .foot{height:4px;border-top:1px solid #ccc;background:#eee}
  .handle{position:absolute;left:100%;top:calc(50% - 25px);width:8px;height:31px;border:1px solid #999;border-left:0;background:#f4f4f4;display:grid;place-items:center;z-index:1}`}
  html(){return `<div class="grip"></div><div class="tabs"><div>${['part','prop','config','cross','ball'].map((n,i)=>tb(n,`fill class="t${i?'':' on'}"`)).join('')}</div><span class="more">${tb('chev')}${['eyeoff','cube','ballpen','parteye'].map(n=>tb(n)).join('')}</span></div>
  <div class="body"><div class="tree"><div class="filter">${ic('filt')}<input aria-label="Filter"></div><div class="mid"><div class="list"><div class="root">${ic('part',15)}<span>doubleLoopSurface6-3dSketchConvertedEntities</span></div>
  ${TREE.map(r=>`<sw-feature-row icon="${r[1]}"${r[3]?' open':''}>${esc(r[0])}</sw-feature-row>`).join('')}</div><div class="vs">${chev('M2 8l3-4 3 4')}<b></b>${chev('M2 3l3 4 3-4')}</div></div>
  <div class="hs">${chev('M7 2L3 5l4 3')}<b></b>${chev('M3 2l4 3-4 3')}</div></div>
  <div class="pane"><div class="col c1"><div class="top"></div>${TREE.map(r=>`<div>${ic(r[2]||'blank')}</div>`).join('')}<div class="last">${ic('skgray')}</div></div><div class="col c2"></div><div class="col c3"><div class="sw"></div></div><div class="col c4"></div></div></div><div class="foot"></div><div class="handle"></div>`}
});

/* shaded solid model: every curve is a chain of cubic pieces [start, c1, c2, end, c1, c2, end, ...] */
const bz=(p,move=true)=>(move?'M':'L')+p[0]+p.slice(1).map((q,i)=>(i%3?' ':'C')+q).join('');
const rev=p=>[...p].reverse();
const inner=[[1055,481],[1092,512],[1104,552],[1102,593],[1100,715],[930,835],[765,835],[680,835],[602,808],[549,759]];
const outer=[[1087,468],[1120,502],[1139,545],[1139,588],[1139,735],[965,867],[762,867],[665,867],[588,843],[527,784]];
const bottom=[[517,923],[580,985],[668,1014],[767,1014],[900,1014],[1010,968],[1141,856]];
const rightEnd=[[1554,505],[1622,452],[1658,400],[1658,343],[1658,300],[1640,262],[1607,228],[1594,214],[1578,206],[1558,207]];
const leftEdge=[[527,784],[510,842],[503,870],[517,923]];
const neck=[[1234,383],[1190,424],[1146,452],[1087,468],[1076,471],[1066,475],[1055,481]];
const flat2=[[1558,207],[1590,237],[1594,277],[1582,310],[1560,374],[1470,433],[1378,433],[1318,433],[1262,413],[1234,383]];
const seam=[[1072,744],[1105,778],[1128,813],[1141,856]];
const outline=bz(bottom)+'L1297 723 1390 645 1554 505'+bz(rightEnd,false)+bz(neck,false)+'L549 758C536 765 531 772 527 784'+bz(leftEdge,false)+'Z';
def('sw-model',class extends Base{
  css(){return ':host{display:block;position:absolute;inset:0}svg{width:100%;height:100%;display:block}text{font-family:"Liberation Sans"}'}
  html(){const ring=bz(outer)+'C531 772 536 765 549 759'+bz(rev(inner),false)+'Z';
  const blur=(id,s)=>`<filter id="${id}" x="-60%" y="-60%" width="220%" height="220%"><feGaussianBlur stdDeviation="${s}"/></filter>`;
  return `<svg viewBox="320 120 1726 992" preserveAspectRatio="xMidYMid meet"><defs>
  <clipPath id="o"><path d="${outline}"/></clipPath><clipPath id="r"><path d="${ring}"/></clipPath>
  ${blur('b3',3)}${blur('b6',6)}${blur('b9',9)}${blur('b16',16)}${blur('b30',30)}
  <linearGradient id="g1" gradientUnits="userSpaceOnUse" x1="530" y1="960" x2="1070" y2="735"><stop offset="0" stop-color="#3b3a4d"/><stop offset=".25" stop-color="#5c5b7b"/><stop offset=".5" stop-color="#7b7aa6"/><stop offset=".72" stop-color="#9594c8"/><stop offset=".88" stop-color="#a6a5de"/><stop offset="1" stop-color="#b7b6f5"/></linearGradient>
  <linearGradient id="g2" gradientUnits="userSpaceOnUse" x1="530" y1="790" x2="1130" y2="560"><stop offset="0" stop-color="#8a88b6"/><stop offset=".4" stop-color="#9695c8"/><stop offset=".7" stop-color="#aeace8"/><stop offset="1" stop-color="#acabe4"/></linearGradient>
  <linearGradient id="g3" gradientUnits="userSpaceOnUse" x1="0" y1="470" x2="0" y2="750"><stop offset="0" stop-color="#8483b2" stop-opacity=".3"/><stop offset=".45" stop-color="#8180ae"/><stop offset="1" stop-color="#8b8abb" stop-opacity="0"/></linearGradient>
  <linearGradient id="g4" gradientUnits="userSpaceOnUse" x1="527" y1="0" x2="860" y2="0"><stop offset="0" stop-color="#5d5b7c"/><stop offset="1" stop-color="#8a89ba" stop-opacity="0"/></linearGradient></defs>
  <g clip-path="url(#o)"><path d="${outline}" fill="#aeade8"/>
   <path d="M1150 470L1234 375 1340 420 1330 520 1250 580 1170 530Z" fill="#9291c2" filter="url(#b30)"/>
   <path d="M1190 420L1234 370 1340 425 1300 455 1230 450Z" fill="#8180ae" filter="url(#b16)"/>
   <path d="M1310 430L1400 435 1350 520 1310 520Z" fill="#8f8ec0" filter="url(#b16)"/>
   <path d="M1120 690Q1250 620 1350 560" fill="none" stroke="#bbbaf8" stroke-width="60" filter="url(#b30)"/>
   <path d="M1080 910L1141 862 1297 729 1390 651 1554 511 1626 452" fill="none" stroke="#807da8" stroke-width="34" filter="url(#b16)"/>
   <path d="M1230 735Q1330 680 1390 610" fill="none" stroke="#b6b5f2" stroke-width="18" filter="url(#b9)"/>
   <path d="M1610 463Q1680 380 1660 300 1640 250 1600 217" fill="none" stroke="#8583b2" stroke-width="18" filter="url(#b9)"/>
   <path d="M1608 300Q1620 350 1560 425" fill="none" stroke="#c2c1ff" stroke-width="46" filter="url(#b16)"/>
   <ellipse cx="1583" cy="382" rx="31" ry="18" transform="rotate(-38 1583 382)" fill="#fff" filter="url(#b9)"/>
   <path d="M1500 395L1420 425 1370 500 1280 625 1340 610 1420 530Z" fill="#c6c4ff" filter="url(#b16)"/>
   <path d="M1490 402L1440 418Q1405 465 1376 520 1355 560 1335 580 1375 570 1408 520 1450 460 1490 402Z" fill="#fff" filter="url(#b9)"/>
   <path d="M990 745L1250 670 1310 650 1240 735 1110 790 1030 800Z" fill="#c0beff" filter="url(#b16)"/>
   <path d="M900 1100L400 1100 400 650 1060 700 1072 744Q1128 800 1150 870Z" fill="url(#g1)" filter="url(#b16)"/>
   <path d="M500 930${bz(bottom,false)}" fill="none" stroke="#3d3a55" stroke-opacity=".5" stroke-width="56" filter="url(#b30)"/>
   <path d="M1040 790Q1030 745 1110 728L1240 692 1290 672Q1250 715 1180 738 1110 780 1040 790Z" fill="#f3f2ff" filter="url(#b9)"/>
   <g clip-path="url(#r)"><path d="${ring}" fill="url(#g2)"/>
    <path d="M762 867C665 867 588 843 527 784" transform="translate(0 5)" fill="none" stroke="url(#g4)" stroke-width="22" filter="url(#b6)"/>
    <path d="${bz(inner.slice(0,7))}" fill="none" stroke="url(#g3)" stroke-width="24" filter="url(#b6)"/>
    <path d="M740 858Q900 862 1050 752 1110 690 1122 620 1092 690 1030 748 910 835 740 845Z" fill="#bebdfc" filter="url(#b6)"/>
    <path d="M810 853Q930 840 1022 768 940 818 810 853Z" fill="#fff" stroke="#fff" stroke-width="3" filter="url(#b3)"/></g>
   <path d="${bz(rev(inner))}Z" fill="#9796c9"/><path d="${bz(flat2)}Z" fill="#9796c9"/></g>
  <g fill="none" stroke="#2f2e44" stroke-width="1.100" stroke-dasharray="3 1.500 1 1.500"><path d="${bz(inner)}"/><path d="${bz(outer)}"/><path d="M1320 428C1260 488 1205 530 1134 549"/><path d="M1138 570Q1175 594 1199 611C1260 650 1285 678 1297 722"/><path d="M1320 428Q1350 520 1362 557L1390 645"/><path d="M1503 399Q1532 445 1554 505"/><path d="${bz(seam)}"/></g>
  <path d="${outline}" fill="none" stroke="#4597c4" stroke-width="1.300"/>
  <g fill="none" stroke="#222230" stroke-width="1.200"><path d="${bz(flat2)}"/><path d="M1607 228C1631 252 1647 280 1654 309"/></g>
  <g stroke-width="3.500" fill="none"><path d="M352 1066l16-9" stroke="#1c7a34"/><path d="M352 1066l10 9" stroke="#c81e1e"/><path d="M352 1066l-2-12" stroke="#2020c0"/></g>
  <path d="M365 1053l8 1-4 7z" fill="#1c7a34"/><path d="M365 1070l-6 7 7 3z" fill="#c81e1e"/><path d="M348 1048l-3 9 8-1z" fill="#2020c0"/>
  <g font-size="9"><text x="343" y="1049" fill="#4a4ad0">Z</text><text x="371" y="1054" fill="#3a9a50">Y</text><text x="363" y="1084" fill="#d44">X</text></g></svg>`}
});

def('sw-orientation',class extends Base{
  css(){return `:host{display:flex;flex-direction:column;position:absolute;right:80px;top:502px;width:181px;height:325px;background:#f5f5f5;border:1px solid #bbb;box-shadow:0 2px 9px #0005;--cell:22px}
  header{display:flex;height:24px;background:#fff;align-items:center;padding-left:6px;color:#999;justify-content:space-between}header button{width:15px;height:15px;background:#e4e4e4;color:#fff}
  .tools{display:flex;height:26px;background:#efefef;border-bottom:1px solid #bbb;}.tools .g{margin-left:9px}
  .views{display:grid;grid-template-columns:repeat(4,22px) 1fr 22px;grid-template-rows:repeat(3,23px)}.views sw-tool,.views span{display:flex;justify-content:center}
  .cube{grid-column:5/7;justify-self:end;display:flex}hr{border:0;border-top:1px solid #ccc;margin:3px 0 0 24px;width:auto}
  .saved{display:flex;align-items:center;height:23px;width:100%;padding-left:3px;gap:5px;border-bottom:1px solid #ccc}.saved i{margin-left:auto;margin-right:6px;border:4px solid transparent;border-left:4px solid #555;border-right:0}
  .lay{display:flex;height:25px}.lay .l{margin-left:auto}`}
  html(){return `<header><span>Orientation</span><button aria-label="Close">×</button></header><div class="tools">${tb('v_l')}${tb('v_new')}${tb('v_grid')}${tb('v_undo')}${tb('triad','class="g"')}${ar}${tb('persp')}${tb('pin')}</div>
  <div class="views"><span></span>${tb('o_top')}<span></span><span></span><div class="cube">${tb('cube')}${ar}</div>${tb('o_left')}${tb('o_front')}${tb('o_right')}${tb('o_back')}<span></span><span></span><span></span>${tb('o_bot')}<span></span><span></span><span></span>${tb('normal')}</div><hr>
  <button class="saved">${ic('globe')}Saved Views<i></i></button><div class="lay">${tb('w1')}${tb('w2')}${tb('w3')}${tb('w4')}${tb('link','off class="l"')}</div>`}
});
def('sw-viewport',class extends Base{
  css(){return `:host{display:block;flex:1;position:relative;background:#fff;border-right:1px solid #ddd}
  .hud{position:absolute;top:2px;left:50%;transform:translateX(-50%);display:flex;height:19px;--cell:21px;--arrow:11px}
  .doc{position:absolute;top:2px;right:3px;display:flex;height:19px;--cell:21px;opacity:.5}
  .task{position:absolute;right:0;top:61px;width:19px;display:flex;flex-direction:column;border:1px solid #999;border-right:0;background:#d4d4d4;--cell:19px}.task sw-tool{height:19px;flex:none;border-bottom:1px solid #999}.task sw-tool:first-child{background:#f7f7f7}`}
  html(){return `<sw-model></sw-model><div class="hud">${tb('zoomfit')}${tb('zoomarea')}${tb('prev')}${tb('sect')}${tb('views')}${arx}${tb('dispst')}${arx}${tb('eye','on')}${ar}${tb('ballpen')}${tb('scene')}${arx}${tb('monitor')}${arx}</div>
  <div class="doc">${['docl','docr','min','rest','close'].map(n=>tb(n)).join('')}</div><div class="task">${['home','lib','fold2','palette','ball','prop'].map(n=>tb(n)).join('')}</div><sw-orientation></sw-orientation>`}
});
def('sw-modeltabs',class extends Base{
  css(){return `:host{display:flex;height:13px;border-top:1px solid #8a8a8a;background:#f7f7f7;padding-left:24px}button{height:12px;line-height:10px}.lead{width:21px;border-left:1px solid #8ab;background:#fff}
  .nav{display:flex;width:52px}.nav button{flex:1;background:#a8a8a8;border-right:1px solid #8a8a8a;color:#888;display:grid;place-items:center}.on{background:#f7f7f7;font-weight:bold;padding:0 9px 0 11px}.m{background:#d2d2d2;border:1px solid #999;border-top:0;padding:0 14px 0 7px;color:#222}`}
  html(){return `<span class="lead"></span><div class="nav">${['M3 2v6M8 2L5 5l3 3','M7 2L4 5l3 3','M4 2l3 3-3 3','M3 2l3 3-3 3M8 2v6'].map(d=>`<button aria-label="step"><svg width="8" height="8" viewBox="0 0 10 10"><path d="${d}" fill="none" stroke="#777" stroke-width="1.500"/></svg></button>`).join('')}</div><button class="on">Model</button><button class="m">Motion Study 1</button>`}
});
def('sw-filterbar',class extends Base{
  css(){return `:host{display:flex;height:24px;background:#f6f6f6;padding:2px 0 0 2px;--cell:22px}.grip{width:6px;border-left:2px dotted #aaa;margin:2px 0}div{display:flex}.f{width:561px}hr{border:0;width:1px;background:#aaa;margin:1px 4px 1px 3px}hr+.f{margin-left:-3px}`}
  html(){const m=n=>tb(n,'fill filter');return `<div class="grip"></div>${tb('f1','off')}${tb('f2','off')}${tb('f3')}${tb('cursor','on')}${ar}${tb('curs2','off')}<hr>
  <div class="f">${['dot','edge','face','surf','cube','axis','plane','pt','sketch','cl','seg','tgt','datum','lens','surfin','gtol','noten','anote','weld','cater','balloon','cosm','sheet','com','conn','conn2'].map(n=>`<sw-filter-tool name="${n}"></sw-filter-tool>`).join('')}</div><hr>`}
});
/* selection-filter button: icon with the purple funnel mark */
def('sw-filter-tool',class extends Base{
  css(){return ':host{display:flex;flex:1 1 0;min-width:0}button{flex:1;display:grid;place-items:center}'}
  html(){const n=this.getAttribute('name');return `<button aria-label="filter ${n}"><sw-icon name="${n}" filter></sw-icon></button>`}
});
def('sw-app',class extends Base{
  css(){return `:host{display:flex;flex-direction:column;height:100vh;box-sizing:border-box;border:2px solid #e3c71f;border-width:3px 2px 3px;background:#f7f7f7}
  main{display:flex;flex:1;min-height:0;position:relative}.tabs{position:absolute;left:0;top:0;z-index:2}.left{display:flex;padding-top:17px;background:#f7f7f7}`}
  html(){return `<sw-titlebar></sw-titlebar><sw-macrobar></sw-macrobar><sw-ribbon></sw-ribbon><main><sw-tabs class="tabs"></sw-tabs><div class="left"><sw-annostrip></sw-annostrip><sw-feature-tree></sw-feature-tree></div><sw-viewport></sw-viewport></main><sw-modeltabs></sw-modeltabs><sw-filterbar></sw-filterbar>`}
});
</script>
</body>
</html>
